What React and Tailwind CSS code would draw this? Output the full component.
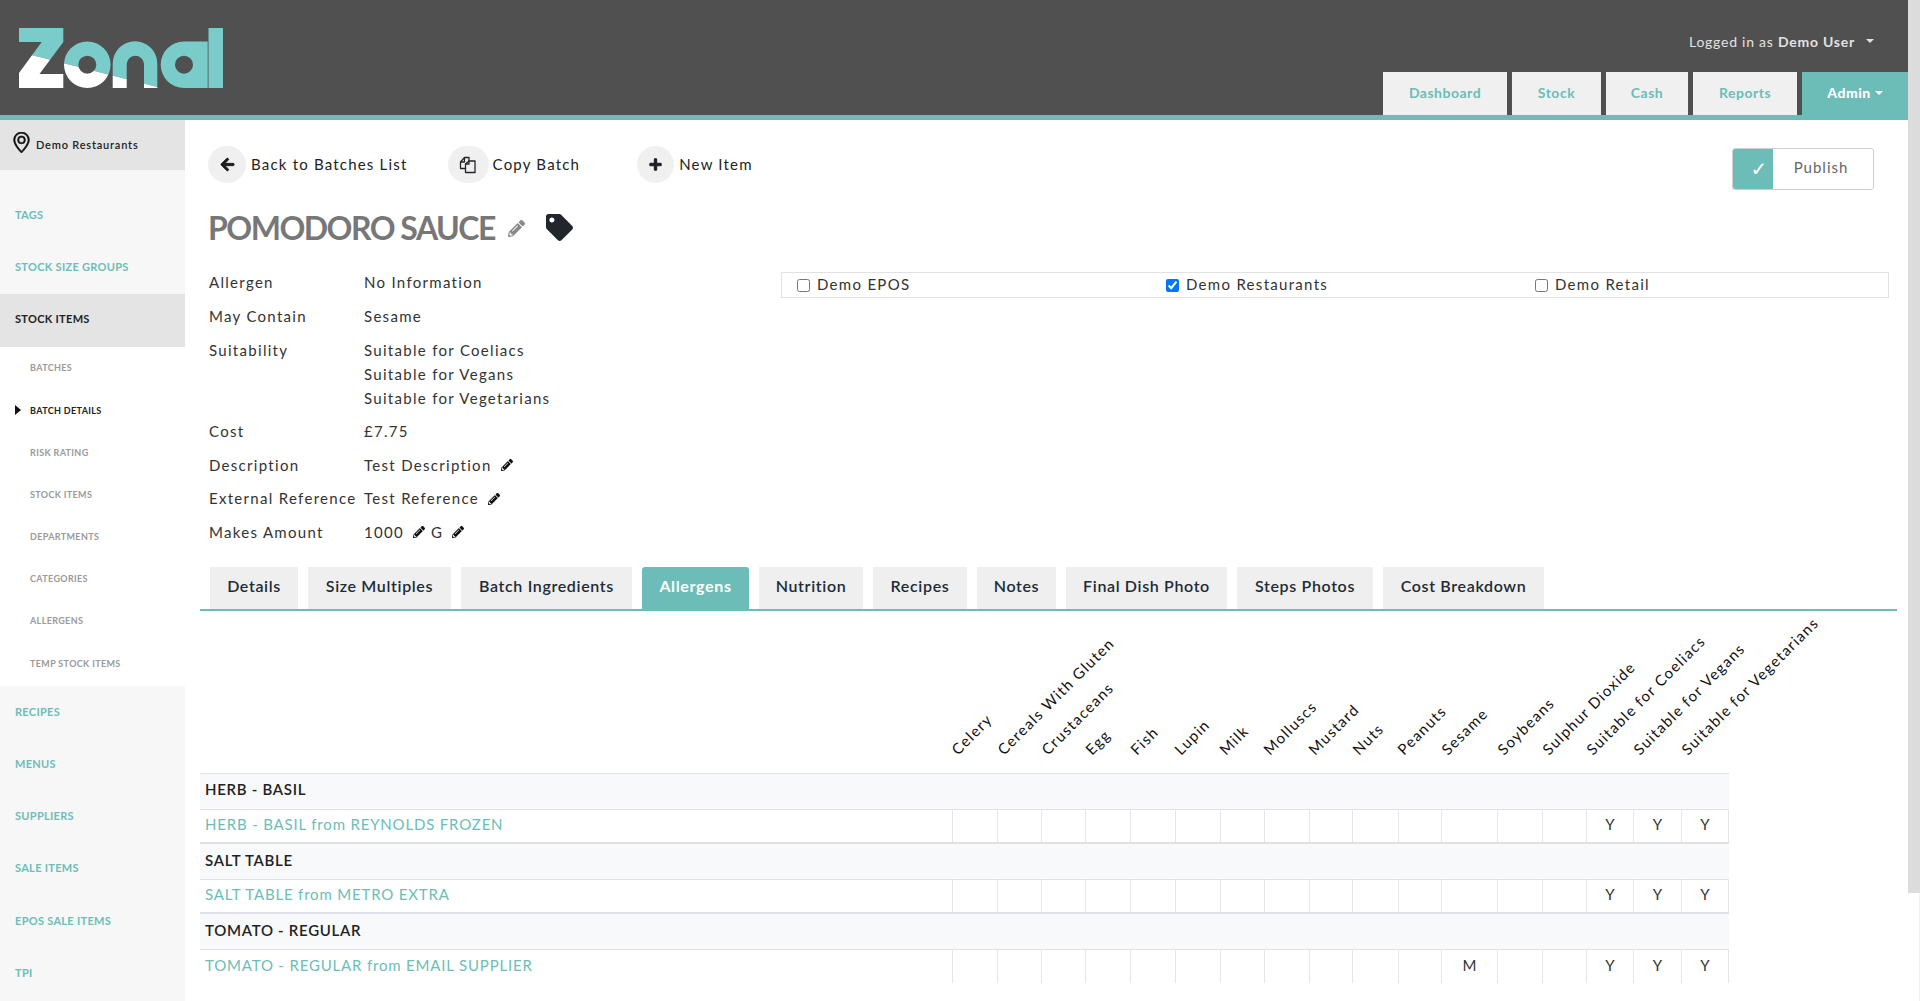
import React from "react";
import { FaArrowLeft, FaPlus, FaTag, FaPencilAlt } from "react-icons/fa";
import { BsGeoAlt } from "react-icons/bs";

function Logo() {
  const letters = (
    <>
      <polygon points="19,28 63.3,28 63.3,42 39.5,74 63.3,74 63.3,88 19,88 19,73 41.7,42 19,42" />
      <path fillRule="evenodd" d="M87.3 41.4a23.3 23.3 0 1 1 0 46.6a23.3 23.3 0 1 1 0-46.6ZM87.3 55.7a9 9 0 1 0 0 18a9 9 0 1 0 0-18Z" />
      <path d="M112.7 88V63.6a22.3 22.3 0 0 1 44.6 0V88H144V63.6a8.7 8.7 0 0 0-17.3 0V88Z" />
      <path fillRule="evenodd" d="M184 41.4H207.7V88H184a23.3 23.3 0 1 1 0-46.6ZM184 55.7a9 9 0 1 0 0 18a9 9 0 1 0 0-18Z" />
      <rect x="208.5" y="28" width="14.5" height="60" />
    </>
  );
  return (
    <svg width="240" height="115" viewBox="0 0 240 115" className="block">
      <defs>
        <clipPath id="zonal-top"><polygon points="0,47 240,108 240,0 0,0" /></clipPath>
        <clipPath id="zonal-bottom"><polygon points="0,47 240,108 240,115 0,115" /></clipPath>
      </defs>
      <g fill="#7accca" clipPath="url(#zonal-top)">{letters}</g>
      <g fill="#ffffff" clipPath="url(#zonal-bottom)">{letters}</g>
    </svg>
  );
}

function CopyIcon() {
  return (
    <svg width="18" height="18" viewBox="0 0 18 18" fill="none" stroke="#22262c" strokeWidth="1.3" strokeLinejoin="round">
      <path d="M6.5 12.5H1.5V6L5.5 1.5H10V5" />
      <path d="M5.5 1.5V6H1.5" />
      <path d="M6.5 8L10 5H16V16.5H6.5Z" fill="#f0f0f0" />
      <path d="M10 5V8H6.5" />
    </svg>
  );
}

const navTabs = [
  ["Dashboard", "w-[124px]"],
  ["Stock", "w-[89px]"],
  ["Cash", "w-[82px]"],
  ["Reports", "w-[104px]"],
];

function Header() {
  return (
    <header className="h-[120px] shrink-0 bg-[#505050] border-b-[5px] border-[#6cbdb7] flex justify-between">
      <Logo />
      <div className="flex flex-col items-end">
        <div className="h-[72px] pt-[32px] pr-[34px] text-[14px] leading-[20px] tracking-[0.76px] text-[#e2e2e2] flex">
          <span>Logged in as&nbsp;</span>
          <span className="font-bold">Demo User</span>
          <span className="ml-[11px] mt-[7px] w-0 h-0 border-x-[4px] border-x-transparent border-t-[4px] border-t-[#e2e2e2]" />
        </div>
        <nav className="flex gap-[5px] h-[43px] text-[14px] font-bold tracking-[0.5px]">
          {navTabs.map(([t, w]) => (
            <div key={t} className={`${w} bg-[#f0f0f0] text-[#6cbdb7] flex items-center justify-center pb-[2px]`}>{t}</div>
          ))}
          <div className="w-[106px] h-[48px] bg-[#6cbdb7] text-white font-black flex items-center justify-center gap-[4px] pb-[7px]">
            Admin
            <span className="w-0 h-0 border-x-[4px] border-x-transparent border-t-[4px] border-t-white" />
          </div>
        </nav>
      </div>
    </header>
  );
}

const topLinks = ["TAGS", "STOCK SIZE GROUPS"];
const subLinks = ["BATCHES", "BATCH DETAILS", "RISK RATING", "STOCK ITEMS", "DEPARTMENTS", "CATEGORIES", "ALLERGENS", "TEMP STOCK ITEMS"];
const bottomLinks = ["RECIPES", "MENUS", "SUPPLIERS", "SALE ITEMS", "EPOS SALE ITEMS", "TPI"];

function Sidebar() {
  return (
    <aside className="w-[185px] shrink-0 bg-[#f7f7f7] text-[11px] font-bold tracking-[0.3px]">
      <div className="h-[50px] bg-[#e4e4e4] flex items-center pl-[11px] gap-[4px]">
        <BsGeoAlt className="text-[21px] text-[#111] mb-[6px] [stroke-width:0.5] shrink-0" />
        <span className="text-[#222] font-semibold tracking-[0.8px] mt-[1px]">Demo Restaurants</span>
      </div>
      <div className="pt-[19px]">
        {topLinks.map((t) => (
          <div key={t} className="h-[52px] flex items-center pl-[15px] text-[#6cbdb7]">{t}</div>
        ))}
      </div>
      <div className="h-[53px] mt-[1px] pb-[2px] bg-[#e4e4e4] flex items-center pl-[15px] text-[#222]">STOCK ITEMS</div>
      <div className="h-[339px] pb-[2px] bg-white text-[9px] tracking-[0.35px] text-[#9a9a9a]">
        {subLinks.map((t) => (
          <div key={t} className={`h-[42.2px] flex items-center pl-[30px] relative ${t === "BATCH DETAILS" ? "text-[#222]" : ""}`}>
            {t === "BATCH DETAILS" && (
              <span className="absolute left-[15px] w-0 h-0 border-y-[5px] border-y-transparent border-l-[6px] border-l-[#111]" />
            )}
            {t}
          </div>
        ))}
      </div>
      {bottomLinks.map((t) => (
        <div key={t} className="h-[52.2px] flex items-center pl-[15px] text-[#6cbdb7]">{t}</div>
      ))}
    </aside>
  );
}

function Toolbar() {
  return (
    <div className="h-[85px] pt-[26px] pl-[8px] pr-[23px] flex justify-between items-start">
      <div className="flex items-center h-[37px] text-[15px] tracking-[1.2px] text-[#222]">
        <span className="w-[38px] h-[37px] rounded-full bg-[#f0f0f0] flex items-center justify-center"><FaArrowLeft className="text-[15px] [stroke-width:30] text-[#1a1d22]" /></span>
        <span className="ml-[5px]">Back to Batches List</span>
        <span className="ml-[40px] w-[41px] h-[37px] rounded-full bg-[#f0f0f0] flex items-center justify-center"><CopyIcon /></span>
        <span className="ml-[4px]">Copy Batch</span>
        <span className="ml-[57px] w-[37px] h-[37px] rounded-full bg-[#f0f0f0] flex items-center justify-center"><FaPlus className="text-[13px] [stroke-width:40] text-[#1a1d22]" /></span>
        <span className="ml-[5px]">New Item</span>
      </div>
      <div className="mt-[2px] w-[142px] h-[42px] border border-[#cfcfcf] rounded-[3px] flex overflow-hidden">
        <span className="w-[40px] pl-[12px] bg-[#6cbdb7] text-white text-[20px] font-bold font-['DejaVu_Sans',sans-serif] flex items-center justify-center">✓</span>
        <span className="flex-1 flex items-center justify-center pb-[3px] pr-[4px] text-[15px] tracking-[1px] text-[#666]">Publish</span>
      </div>
    </div>
  );
}

const pencil = <FaPencilAlt className="text-[12px] text-[#111] inline-block" />;

function Row({ label, children }) {
  return (
    <div className="flex h-[33.5px]">
      <div className="w-[155px] shrink-0 leading-[33.5px]">{label}</div>
      <div className="leading-[33.5px] flex items-center gap-[9px] self-start h-[33.5px]">{children}</div>
    </div>
  );
}

function Details() {
  return (
    <div className="flex">
      <div className="w-[581px] shrink-0 pl-[9px] h-[284px] text-[15px] tracking-[1.3px] text-[#333]">
        <Row label="Allergen">No Information</Row>
        <Row label="May Contain">Sesame</Row>
        <div className="flex h-[82px] pt-[5px]">
          <div className="w-[155px] shrink-0 leading-[24px]">Suitability</div>
          <div className="leading-[24px]">
            <div>Suitable for Coeliacs</div>
            <div>Suitable for Vegans</div>
            <div>Suitable for Vegetarians</div>
          </div>
        </div>
        <Row label="Cost">£7.75</Row>
        <Row label="Description"><span>Test Description</span>{pencil}</Row>
        <Row label="External Reference"><span>Test Reference</span>{pencil}</Row>
        <Row label="Makes Amount"><span>1000</span>{pencil}<span className="-ml-[3px]">G</span>{pencil}</Row>
      </div>
      <div className="mt-[6px] w-[1108px] h-[26px] border border-[#e2e2e2] grid grid-cols-[369px_369px_1fr] pl-[15px] pb-[3px] text-[15px] tracking-[1.3px] text-[#333]">
        {[["Demo EPOS", false], ["Demo Restaurants", true], ["Demo Retail", false]].map(([t, c]) => (
          <label key={t} className="flex items-center gap-[7px]">
            <input type="checkbox" defaultChecked={c} className="w-[13px] h-[13px] mt-[2px] accent-[#0075ff]" />
            <span>{t}</span>
          </label>
        ))}
      </div>
    </div>
  );
}

const tabs = [
  ["Details", "w-[88px]"],
  ["Size Multiples", "w-[143px]"],
  ["Batch Ingredients", "w-[171px]"],
  ["Allergens", "w-[107px]"],
  ["Nutrition", "w-[104px]"],
  ["Recipes", "w-[94px]"],
  ["Notes", "w-[79px]"],
  ["Final Dish Photo", "w-[161px]"],
  ["Steps Photos", "w-[136px]"],
  ["Cost Breakdown", "w-[161px]"],
];

function Tabs() {
  return (
    <div className="mt-[17px] h-[44px] border-b-2 border-[#6cbdb7] flex gap-[10px] pl-[10px] text-[16px] font-semibold tracking-[0.65px] text-[#212b36]">
      {tabs.map(([t, w]) =>
        t === "Allergens" ? (
          <div key={t} className={`${w} bg-[#6cbdb7] text-white font-bold pb-[4px] rounded-t-[3px] flex items-center justify-center`}>{t}</div>
        ) : (
          <div key={t} className={`${w} bg-[#efefef] pb-[4px] flex items-center justify-center`}>{t}</div>
        )
      )}
    </div>
  );
}

const cols = [
  ["Celery", 45.6], ["Cereals With Gluten", 44], ["Crustaceans", 44], ["Egg", 45], ["Fish", 44.6], ["Lupin", 45],
  ["Milk", 44], ["Molluscs", 45], ["Mustard", 43.5], ["Nuts", 45.7], ["Peanuts", 43.5], ["Sesame", 56],
  ["Soybeans", 45], ["Sulphur Dioxide", 44], ["Suitable for Coeliacs", 47], ["Suitable for Vegans", 48], ["Suitable for Vegetarians", 47],
];

const rows = [
  ["HERB - BASIL", "HERB - BASIL from REYNOLDS FROZEN", {}],
  ["SALT TABLE", "SALT TABLE from METRO EXTRA", {}],
  ["TOMATO - REGULAR", "TOMATO - REGULAR from EMAIL SUPPLIER", { Sesame: "M" }],
];

function AllergenTable() {
  return (
    <table className="w-[1528px] table-fixed border-collapse text-[15px] tracking-[0.82px] text-[#333]">
      <colgroup>
        <col className="w-[752px]" />
        {cols.map(([c, w]) => (
          <col key={c} style={{ width: w }} />
        ))}
      </colgroup>
      <thead>
        <tr className="h-[162px]">
          <th />
          {cols.map(([c]) => (
            <th key={c} className="align-bottom p-0 pb-[15px] font-normal text-left">
              <div className="w-0 h-[18px] ml-[8px] whitespace-nowrap origin-bottom-left -rotate-[45deg] text-[#111] tracking-[1.3px] leading-[18px]">{c}</div>
            </th>
          ))}
        </tr>
      </thead>
      <tbody>
        {rows.map(([group, link, marks], i) => (
          <React.Fragment key={group}>
            <tr className={`h-[36px] bg-[#f8f9fa] ${i === 0 ? "border-t border-[#dee2e6]" : "border-t-2 border-[#dee2e6]"} border-b border-b-[#dee2e6]`}>
              <td colSpan={18} className="p-0 pl-[5px] pb-[3px] font-semibold text-[#222] tracking-[0.7px]">{group}</td>
            </tr>
            <tr className="h-[34px]">
              <td className="p-0 pl-[5px] pb-[3px] text-[#6cbdb7]">{link}</td>
              {cols.map(([c]) => (
                <td key={c} className="p-0 pb-[3px] border-l border-r border-[#e6e6e6] text-center">
                  {c.startsWith("Suitable") ? "Y" : marks[c] || ""}
                </td>
              ))}
            </tr>
          </React.Fragment>
        ))}
      </tbody>
    </table>
  );
}

function Main() {
  return (
    <main className="flex-1 min-w-0 pl-[15px] pr-[11px] bg-white">
      <Toolbar />
      <div className="pl-[8px] h-[61px] flex items-start gap-[13px]">
        <h1 className="text-[32px] leading-[40px] mt-[3px] font-bold text-[#777] tracking-[-1.5px]">POMODORO SAUCE</h1>
        <FaPencilAlt className="text-[17px] text-[#888] mt-[15px]" />
        <FaTag className="text-[27px] text-[#22262c] ml-[8px] mt-[9px]" />
      </div>
      <Details />
      <Tabs />
      <AllergenTable />
    </main>
  );
}

export default function App() {
  return (
    <div className="w-[1920px] h-[1001px] overflow-hidden flex font-['Lato','Liberation_Sans',sans-serif]">
      <div className="flex-1 min-w-0 flex flex-col">
        <Header />
        <div className="flex-1 min-h-0 flex">
          <Sidebar />
          <Main />
        </div>
      </div>
      <div className="w-[12px] shrink-0 bg-white border-r border-[#f2f2f2] flex flex-col">
        <div className="h-[893px] w-[12px] bg-[#dcdcdc]" />
      </div>
    </div>
  );
}
